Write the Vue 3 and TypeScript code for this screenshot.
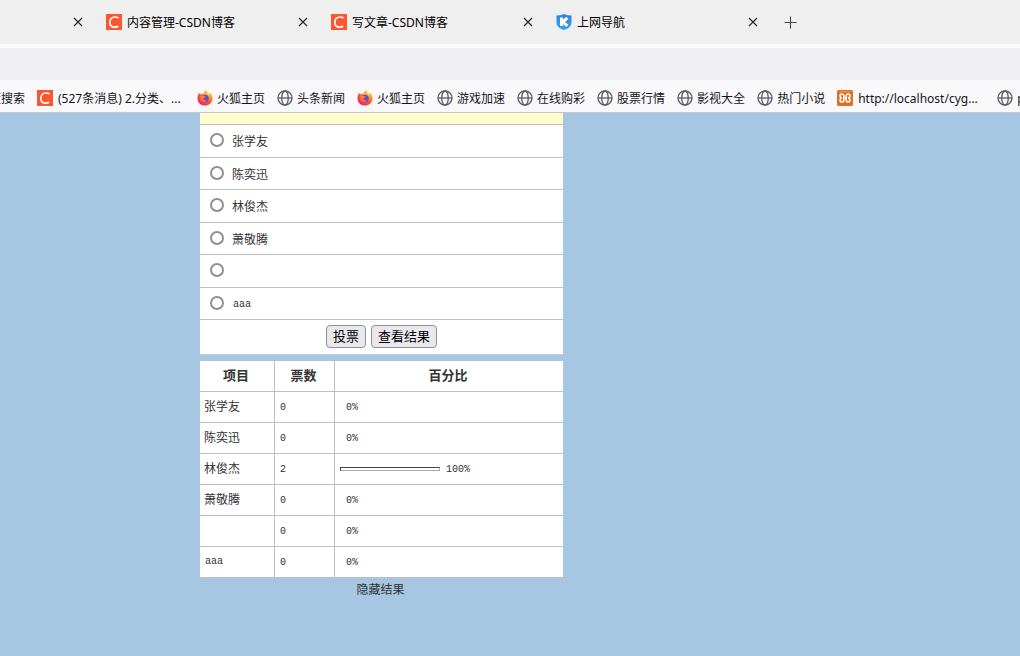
<script setup lang="ts">
import { ref } from 'vue'

type IconName = 'csdn' | 'shield' | 'firefox' | 'globe' | 'xampp' | 'none'

interface Tab {
  icon: IconName
  title: string
}

interface Bookmark {
  icon: IconName
  label: string
  wide?: boolean
}

interface Candidate {
  name: string
  votes: number
  percent: number
}

const tabs: Tab[] = [
  { icon: 'csdn', title: '内容管理-CSDN博客' },
  { icon: 'csdn', title: '写文章-CSDN博客' },
  { icon: 'shield', title: '上网导航' },
]

const bookmarks: Bookmark[] = [
  { icon: 'none', label: '百度搜索' },
  { icon: 'csdn', label: '(527条消息) 2.分类、...', wide: true },
  { icon: 'firefox', label: '火狐主页' },
  { icon: 'globe', label: '头条新闻' },
  { icon: 'firefox', label: '火狐主页' },
  { icon: 'globe', label: '游戏加速' },
  { icon: 'globe', label: '在线购彩' },
  { icon: 'globe', label: '股票行情' },
  { icon: 'globe', label: '影视大全' },
  { icon: 'globe', label: '热门小说' },
  { icon: 'xampp', label: 'http://localhost/cyg...', wide: true },
  { icon: 'globe', label: 'p' },
]

const candidates: Candidate[] = [
  { name: '张学友', votes: 0, percent: 0 },
  { name: '陈奕迅', votes: 0, percent: 0 },
  { name: '林俊杰', votes: 2, percent: 100 },
  { name: '萧敬腾', votes: 0, percent: 0 },
  { name: '', votes: 0, percent: 0 },
  { name: 'aaa', votes: 0, percent: 0 },
]

const isLatin = (text: string): boolean => /^[a-z]+$/i.test(text)

const choice = ref<number | null>(null)
</script>

<template>
  <div class="window">
    <svg class="defs" width="0" height="0" aria-hidden="true">
      <defs>
        <radialGradient id="flame" cx="0.75" cy="0.15" r="0.95">
          <stop offset="0" stop-color="#ffe03a" />
          <stop offset="0.4" stop-color="#ff9a1f" />
          <stop offset="0.7" stop-color="#ff4a3c" />
          <stop offset="1" stop-color="#e8206c" />
        </radialGradient>
        <linearGradient id="shieldFill" x1="0" y1="0" x2="0" y2="1">
          <stop offset="0" stop-color="#2f80d8" />
          <stop offset="1" stop-color="#3aa5ea" />
        </linearGradient>
        <symbol id="icon-csdn" viewBox="0 0 16 16">
          <rect width="16" height="16" fill="#fc5531" />
          <path d="M12.600 4.100C11.500 3.300 10.300 3 9 3C5.700 3 3.800 5.300 3.800 8.200C3.800 11.200 5.600 13.100 8.500 13.100C10 13.100 11.200 12.800 12.200 12.200" fill="none" stroke="#fff" stroke-width="1.700" />
        </symbol>
        <symbol id="icon-shield" viewBox="0 0 16 16">
          <path d="M0.500 1.600Q4.500 1.600 8 0Q11.500 1.600 15.500 1.600V8.500C15.500 12.500 12 14.800 8 16C4 14.800 0.500 12.500 0.500 8.500Z" fill="url(#shieldFill)" />
          <path d="M5.500 3.500V12M11.300 3.800L6.800 7.800L11.300 11.800" fill="none" stroke="#fff" stroke-width="3" />
        </symbol>
        <symbol id="icon-firefox" viewBox="0 0 16 16">
          <path d="M9.800 0C9.300 1.600 10.500 2.500 11.300 3.400C12 3.600 12.400 3.400 12.700 2.800C14.800 4.300 15.700 6.400 15.500 8.800C15.200 12.900 12 15.600 8 15.600C3.700 15.600 0.500 12.500 0.500 8.500C0.500 6.200 1.300 4.300 2.500 2.800L3.100 4.300C4.100 3.800 5.200 3.700 6.300 4C7 2.200 8 0.700 9.800 0Z" fill="url(#flame)" />
          <circle cx="8.200" cy="8.500" r="3.700" fill="#7545d8" />
          <path d="M2.700 6.200C5 5.200 6.600 6.100 8.500 6.500C8.200 8 6.700 7.900 6.100 8.900C6.600 10.200 8.300 10.700 10 9.900C8.800 12.300 5.600 12.400 4 10.200" fill="#ff7d2b" />
        </symbol>
        <symbol id="icon-globe" viewBox="0 0 16 16">
          <g fill="none" stroke="#5b5b66" stroke-width="1.300">
            <circle cx="8" cy="8" r="7" />
            <ellipse cx="8" cy="8" rx="3.300" ry="7" />
            <path d="M1 8H15" />
          </g>
        </symbol>
        <symbol id="icon-xampp" viewBox="0 0 16 16">
          <rect width="16" height="16" rx="1.500" fill="#e46f20" />
          <path d="M2.500 1.700H13.500" stroke="#f3a56d" stroke-width="0.800" />
          <path d="M6.800 5.200C6.500 4.300 5.700 4 4.900 4C3.700 4 3 4.800 3 5.900C3 7 3.700 7.800 4.800 8C3.700 8.200 3 9 3 10.100C3 11.200 3.700 12 4.900 12C6.100 12 6.800 11.200 6.800 10V8H9.200V10C9.200 11.200 9.900 12 11.100 12C12.300 12 13 11.200 13 10.100C13 9 12.300 8.200 11.200 8C12.300 7.800 13 7 13 5.900C13 4.800 12.300 4 11.100 4C10.300 4 9.500 4.300 9.200 5.200V8M6.800 5.200V8" fill="none" stroke="#fff" stroke-width="1.500" />
        </symbol>
      </defs>
    </svg>

    <header class="chrome">
      <div class="tab-strip">
        <div class="tab tab-cut">
          <button class="close" type="button" aria-label="关闭标签页">
            <svg viewBox="0 0 16 16"><path d="M4 4L12 12M12 4L4 12" /></svg>
          </button>
        </div>
        <div v-for="tab in tabs" :key="tab.title" class="tab">
          <svg class="icon"><use :href="`#icon-${tab.icon}`" /></svg>
          <span class="tab-title">{{ tab.title }}</span>
          <button class="close" type="button" aria-label="关闭标签页">
            <svg viewBox="0 0 16 16"><path d="M4 4L12 12M12 4L4 12" /></svg>
          </button>
        </div>
        <button class="new-tab" type="button" aria-label="新建标签页">
          <svg viewBox="0 0 16 16"><path d="M8.500 2.500V14.500M2.500 8.500H14.500" /></svg>
        </button>
      </div>
      <div class="address-row"></div>
      <nav class="bookmarks">
        <a v-for="(mark, i) in bookmarks" :key="i" class="bookmark" href="#">
          <svg v-if="mark.icon !== 'none'" class="icon"><use :href="`#icon-${mark.icon}`" /></svg>
          <span :class="['bookmark-label', { wide: mark.wide }]">{{ mark.label }}</span>
        </a>
      </nav>
    </header>

    <main class="page">
      <div class="poll">
        <form class="ballot" @submit.prevent>
          <div class="ballot-head"></div>
          <div class="options">
            <label v-for="(person, i) in candidates" :key="i" class="option">
              <input v-model="choice" type="radio" name="candidate" :value="i" :aria-label="person.name || '空'" />
              <span :class="{ latin: isLatin(person.name) }">{{ person.name }}</span>
            </label>
          </div>
          <div class="actions">
            <button type="submit">投票</button>
            <button type="button">查看结果</button>
          </div>
        </form>

        <table class="results">
          <thead>
            <tr>
              <th class="col-name">项目</th>
              <th class="col-votes">票数</th>
              <th>百分比</th>
            </tr>
          </thead>
          <tbody>
            <tr v-for="(person, i) in candidates" :key="i">
              <td><span :class="{ latin: isLatin(person.name) }">{{ person.name }}</span></td>
              <td>{{ person.votes }}</td>
              <td>
                <div class="share">
                  <span v-if="person.percent" class="bar" :style="{ width: person.percent + 'px' }"></span>
                  <span class="percent">{{ person.percent }}%</span>
                </div>
              </td>
            </tr>
          </tbody>
        </table>
        <a class="toggle" href="#">隐藏结果</a>
      </div>
    </main>
  </div>
</template>

<style>
html,
body {
  background: #a6c6e1;
}
</style>

<style scoped>
* {
  box-sizing: border-box;
}

.window {
  min-height: 100vh;
  overflow: hidden;
  background: #a6c6e1;
  font-family: "Noto Sans", "Noto Sans CJK SC", sans-serif;
  font-size: 12px;
  color: #15141a;
}

.defs {
  position: absolute;
}

.icon {
  flex: none;
  width: 16px;
  height: 16px;
}

.chrome {
  background: #f9f9fb;
  border-bottom: 1px solid #c3c5c8;
}

.tab-strip {
  display: flex;
  align-items: center;
  height: 44px;
  background: #efefef;
}

.tab {
  display: flex;
  flex: none;
  align-items: center;
  gap: 5px;
  width: 225px;
  padding: 0 12px 0 8px;
}

.tab-cut {
  justify-content: flex-end;
  width: 98px;
}

.tab-title {
  flex: 1;
  padding-top: 2px;
  line-height: 16px;
  white-space: nowrap;
  color: #000;
}

.close,
.new-tab {
  flex: none;
  width: 16px;
  height: 16px;
  padding: 0;
  border: 0;
  background: none;
}

.new-tab {
  margin-left: 9px;
}

.close svg,
.new-tab svg {
  display: block;
  width: 16px;
  height: 16px;
  fill: none;
  stroke: #222;
  stroke-width: 1.1;
}

.new-tab svg {
  stroke: #444;
}

.address-row {
  height: 32px;
  margin-top: 4px;
  background: #f0f0f4;
}

.bookmarks {
  display: flex;
  align-items: center;
  gap: 12px;
  height: 32px;
  margin-left: -23px;
  padding-top: 4px;
  overflow: hidden;
}

.bookmark {
  display: flex;
  flex: none;
  align-items: center;
  gap: 4px;
  color: #15141a;
  text-decoration: none;
}

.bookmark-label {
  padding-top: 2px;
  line-height: 16px;
  white-space: nowrap;
}

.bookmark-label.wide {
  width: 128px;
  padding-left: 1px;
}

.poll {
  display: flex;
  flex-direction: column;
  width: 363px;
  margin-left: 200px;
  font-family: "Liberation Mono", "Noto Sans CJK SC", monospace;
  color: #333;
}

.latin {
  padding: 2px 0 0 1px;
  font-size: 10px;
}

.ballot {
  margin-bottom: 6px;
  background: #fff;
}

.ballot-head {
  height: 12px;
  background: #ffffcc;
  border-bottom: 1px solid #c0c0c0;
}

.option {
  display: flex;
  align-items: center;
  gap: 8px;
  height: 33px;
  padding: 0 10px;
  border-bottom: 1px solid #c0c0c0;
}

.option:nth-child(even) {
  height: 32px;
}

.option input {
  flex: none;
  width: 14px;
  height: 14px;
  margin: 0 0 2px;
  appearance: none;
  background: #fff;
  border: 2px solid #8f8f96;
  border-radius: 50%;
}

.option input:checked {
  border-width: 4px;
  border-color: #0061e0;
}

.actions {
  display: flex;
  align-items: center;
  justify-content: center;
  gap: 5px;
  height: 35px;
  padding-bottom: 2px;
  border-bottom: 1px solid #c4ccd4;
}

.actions button {
  height: 23px;
  padding: 1px 6px 0;
  font-family: "Liberation Sans", "Noto Sans CJK SC", sans-serif;
  font-size: 13px;
  line-height: 20px;
  color: #000;
  background: #e9e9ed;
  border: 1px solid #8f8f9d;
  border-radius: 4px;
}

.results {
  width: 100%;
  table-layout: fixed;
  border-spacing: 0;
  background: #fff;
}

.results th,
.results td {
  height: 31px;
  padding: 0 5px 2px 4px;
  text-align: left;
  border-right: 1px solid #c0c0c0;
  border-bottom: 1px solid #c0c0c0;
}

.results th {
  padding: 0 6px 3px 4px;
  font-size: 13px;
  text-align: center;
}

.results th:last-child,
.results td:last-child {
  border-right: 0;
}

.results td:not(:first-child) {
  padding: 0 5px;
  font-size: 10px;
}

.results .col-name {
  width: 75px;
}

.results .col-votes {
  width: 60px;
}

.share {
  display: flex;
  align-items: center;
}

.percent {
  margin-left: 6px;
}

.bar {
  height: 4px;
  border: 1px solid #aaa;
  border-top-color: #444;
  border-left-color: #444;
}

.toggle {
  align-self: center;
  margin: 5px 2px 0 0;
  line-height: 16px;
  color: #333;
  text-decoration: none;
}
</style>
